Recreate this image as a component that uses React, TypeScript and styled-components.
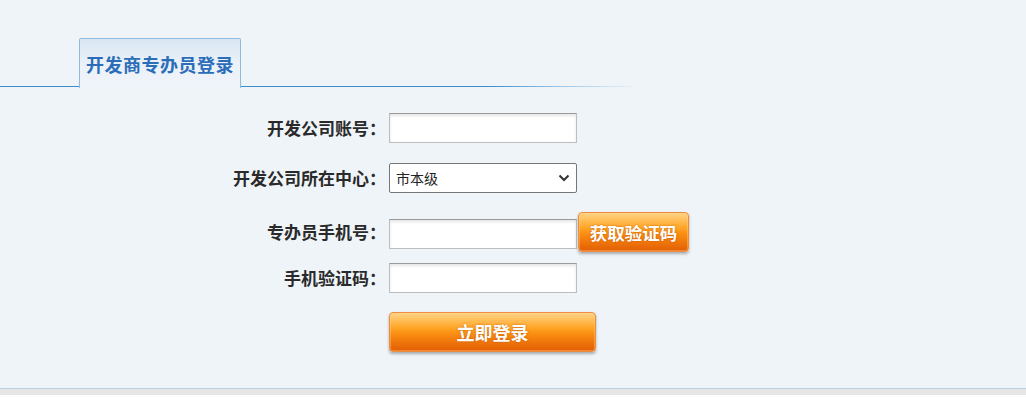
import styled, { createGlobalStyle } from 'styled-components';

const GlobalStyle = createGlobalStyle`
	html, body {
		margin: 0;
		padding: 0;
		background: #fff;
	}
	body {
		font-family: "Noto Sans CJK SC", "Noto Sans", sans-serif;
	}
`;

const Page = styled.div`
	background: #eff4f9;
	height: 389px;
	border-bottom: 1px solid #b9cfe4;
	padding-top: 38px;
	box-sizing: border-box;
`;

const FooterBand = styled.div`
	height: 6px;
	background: #e6e6e6;
`;

const TabBar = styled.div`
	display: flex;
	align-items: flex-end;
	height: 50px;
`;

const Lead = styled.div`
	width: 79px;
	height: 1px;
	margin-bottom: 1px;
	background: #3c8dcb;
`;

const Tail = styled.div`
	width: 399px;
	height: 1px;
	margin-bottom: 1px;
	background: linear-gradient(
		to right,
		#3c8dcb 0%,
		#3c8dcb 62%,
		#9cc6e8 80%,
		rgba(239, 244, 249, 0) 100%
	);
`;

const Tab = styled.div`
	width: 162px;
	height: 50px;
	box-sizing: border-box;
	border: 1px solid #8fbde2;
	border-bottom: none;
	border-radius: 2px 2px 0 0;
	background: linear-gradient(to bottom, #d9e6f2 0%, #eaf1f8 50%, #eff4f9 100%);
	display: flex;
	align-items: center;
	justify-content: center;
	padding-top: 1px;
	font-size: 18px;
	font-weight: 700;
	color: #2b6db8;
	letter-spacing: 0.5px;
`;

const Form = styled.div`
	display: flex;
	flex-direction: column;
	padding-top: 25px;
`;

const Row = styled.div<{ $mt: number }>`
	display: flex;
	align-items: center;
	margin-top: ${ ( p ) => p.$mt }px;
`;

const Label = styled.label`
	width: 389px;
	flex-shrink: 0;
	text-align: right;
	font-size: 17px;
	font-weight: 700;
	color: #2a2a2a;
	line-height: 20px;
	padding-right: 3px;
	box-sizing: border-box;
`;

const Control = styled.div`
	display: flex;
	align-items: flex-start;
	position: relative;
`;

const TextInput = styled.input<{ $offset?: number }>`
	width: 188px;
	height: 30px;
	box-sizing: border-box;
	margin: ${ ( p ) => p.$offset ?? 0 }px 0 0 0;
	border: 1px solid #bdbdbd;
	border-top-color: #9a9a9a;
	box-shadow: inset 0 2px 3px rgba(0, 0, 0, 0.1);
	background: #fff;
	padding: 0 6px;
	font-size: 14px;
	outline: none;
`;

const Select = styled.select`
	width: 188px;
	height: 30px;
	box-sizing: border-box;
	border: 1px solid #767676;
	border-radius: 2px;
	background: #fff;
	appearance: none;
	font-family: "Noto Sans CJK SC", sans-serif;
	font-size: 14px;
	color: #222;
	padding: 0 6px;
	outline: none;
`;

const Chevron = styled.svg`
	position: absolute;
	right: 7px;
	top: 10px;
	width: 12px;
	height: 10px;
	pointer-events: none;
`;

const OrangeButton = styled.button<{ $w: number; $fs: number }>`
	width: ${ ( p ) => p.$w }px;
	height: 40px;
	box-sizing: border-box;
	border: 1px solid #f08a3c;
	border-radius: 4px;
	background:
		linear-gradient(
			to bottom,
			rgba(255, 255, 255, 0.35) 0%,
			rgba(255, 255, 255, 0.1) 30%,
			rgba(255, 255, 255, 0) 50%
		),
		linear-gradient(to bottom, #ffbb44 0%, #ff9f1a 40%, #f37d0c 70%, #e25e05 100%);
	box-shadow: 0 2px 3px rgba(0, 0, 0, 0.3), inset 0 0 0 1px rgba(255, 220, 160, 0.35);
	color: #fff;
	font-family: "Noto Sans CJK SC", sans-serif;
	font-size: ${ ( p ) => p.$fs }px;
	font-weight: 700;
	text-shadow: 0 0 2px rgba(160, 60, 0, 0.6);
	cursor: pointer;
	padding: 0;
`;

const SmsButton = styled( OrangeButton )`
	margin-left: 1px;
`;

export default function App() {
	return (
		<>
			<GlobalStyle />
			<Page>
				<TabBar>
					<Lead />
					<Tab>开发商专办员登录</Tab>
					<Tail />
				</TabBar>
				<Form>
					<Row $mt={ 0 }>
						<Label>开发公司账号：</Label>
						<Control>
							<TextInput type="text" />
						</Control>
					</Row>
					<Row $mt={ 20 }>
						<Label>开发公司所在中心：</Label>
						<Control>
							<Select defaultValue="市本级">
								<option value="市本级">市本级</option>
							</Select>
							<Chevron viewBox="0 0 12 10">
								<path
									d="M1.5 2.5 L6 7 L10.5 2.5"
									fill="none"
									stroke="#333"
									strokeWidth="2"
								/>
							</Chevron>
						</Control>
					</Row>
					<Row $mt={ 19 }>
						<Label>专办员手机号：</Label>
						<Control>
							<TextInput type="text" $offset={ 7 } />
							<SmsButton $w={ 111 } $fs={ 17.5 }>获取验证码</SmsButton>
						</Control>
					</Row>
					<Row $mt={ 11 }>
						<Label>手机验证码：</Label>
						<Control>
							<TextInput type="text" />
						</Control>
					</Row>
					<Row $mt={ 19 }>
						<Label />
						<Control>
							<OrangeButton $w={ 207 } $fs={ 18 }>立即登录</OrangeButton>
						</Control>
					</Row>
				</Form>
			</Page>
			<FooterBand />
		</>
	);
}
